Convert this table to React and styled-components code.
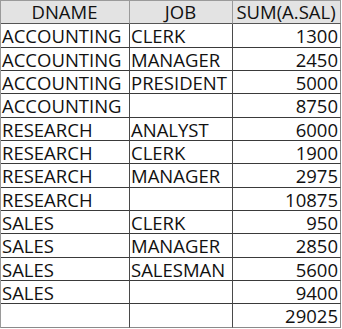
import React from "react";
import styled, { createGlobalStyle } from "styled-components";

const GlobalStyle = createGlobalStyle`
  body {
    margin: 0;
    background: #ffffff;
    font-family: "Open Sans", "Liberation Sans", sans-serif;
  }
`;

const Grid = styled.div`
  display: grid;
  grid-template-columns: 129px 103px 108px;
  grid-auto-rows: 23.33px;
  width: max-content;
  border-top: 1px solid #9a9a9a;
  border-left: 1px solid #9a9a9a;
`;

const Cell = styled.div`
  box-sizing: border-box;
  border-right: 1px solid ${(p) => (p.$last ? "#8a8a8a" : "#4a4a4a")};
  border-bottom: 1px solid ${(p) => (p.$bottom ? "#8a8a8a" : "#3a3a3a")};
  padding: 1px 2px 0 1px;
  font-size: 18.5px;
  line-height: 22px;
  color: #111;
  white-space: nowrap;
  text-align: ${(p) => (p.$num ? "right" : "left")};
`;

const HeadCell = styled(Cell)`
  background: #e3e3e3;
  text-align: center;
  border-bottom-color: #555;
  border-right-color: #9a9a9a;
  padding-top: 0;
`;

const rows = [
  ["ACCOUNTING", "CLERK", "1300"],
  ["ACCOUNTING", "MANAGER", "2450"],
  ["ACCOUNTING", "PRESIDENT", "5000"],
  ["ACCOUNTING", "", "8750"],
  ["RESEARCH", "ANALYST", "6000"],
  ["RESEARCH", "CLERK", "1900"],
  ["RESEARCH", "MANAGER", "2975"],
  ["RESEARCH", "", "10875"],
  ["SALES", "CLERK", "950"],
  ["SALES", "MANAGER", "2850"],
  ["SALES", "SALESMAN", "5600"],
  ["SALES", "", "9400"],
  ["", "", "29025"],
];

export default function App() {
  return (
    <>
      <GlobalStyle />
      <Grid>
        <HeadCell>DNAME</HeadCell>
        <HeadCell>JOB</HeadCell>
        <HeadCell $last>SUM(A.SAL)</HeadCell>
        {rows.map((r, i) => {
          const bottom = i === rows.length - 1;
          return (
            <React.Fragment key={i}>
              <Cell $bottom={bottom}>{r[0]}</Cell>
              <Cell $bottom={bottom}>{r[1]}</Cell>
              <Cell $num $last $bottom={bottom}>
                {r[2]}
              </Cell>
            </React.Fragment>
          );
        })}
      </Grid>
    </>
  );
}
